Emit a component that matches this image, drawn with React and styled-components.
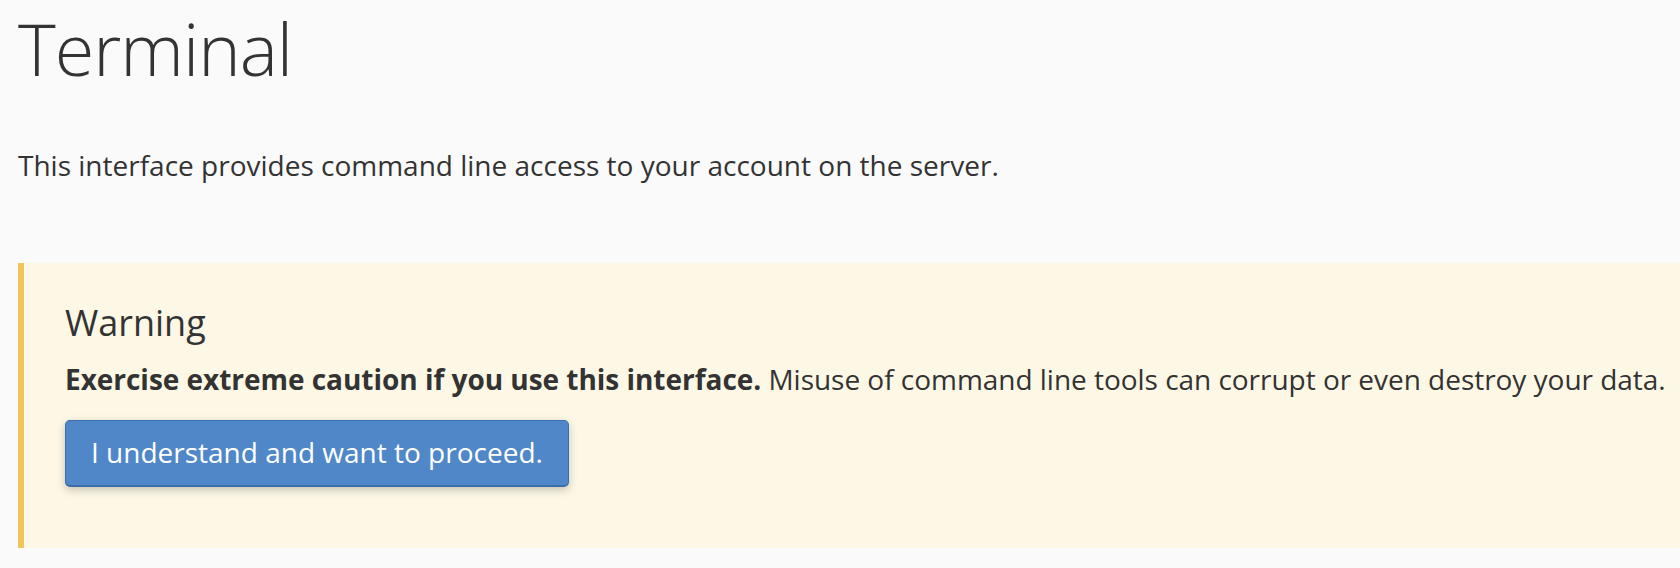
import React from "react";
import styled, { createGlobalStyle } from "styled-components";

const Global = createGlobalStyle`
  html, body {
    margin: 0;
    padding: 0;
    background: #fafafa;
  }
  body {
    font-family: "Open Sans", "Noto Sans", "Liberation Sans", sans-serif;
    color: #333333;
    overflow: hidden;
  }
`;

const Page = styled.main`
  padding: 8px 0 0 18px;
  display: flex;
  flex-direction: column;
`;

const Title = styled.h1`
  margin: 0;
  font-size: 72px;
  font-weight: 300;
  letter-spacing: -1px;
  line-height: 80px;
  color: #333333;
`;

const Intro = styled.p`
  margin: 57px 0 0;
  font-size: 28px;
  line-height: 40px;
`;

const Callout = styled.section`
  margin-top: 78px;
  background: #fdf8e5;
  border-left: 6px solid #f0c55c;
  padding: 40px 40px 61px 41px;
  display: flex;
  flex-direction: column;
  align-items: flex-start;
`;

const CalloutTitle = styled.h4`
  margin: 0;
  font-size: 36px;
  font-weight: 400;
  line-height: 1.1;
`;

const CalloutText = styled.p`
  margin: 16px 0 0;
  font-size: 28px;
  line-height: 40px;
  white-space: nowrap;
  letter-spacing: -0.03px;

  strong {
    font-weight: 700;
  }
`;

const Button = styled.button`
  margin-top: 21px;
  font-family: inherit;
  font-size: 28px;
  line-height: 40px;
  color: #ffffff;
  background: #4f87c8;
  border: 1px solid #3c6eab;
  border-bottom-width: 2px;
  border-radius: 5px;
  padding: 11px 25px 13px 25px;
  box-shadow: 0 3px 9px rgba(0, 0, 0, 0.22);
  cursor: pointer;
`;

export default function App() {
  return (
    <>
      <Global />
      <Page>
        <Title>Terminal</Title>
        <Intro>This interface provides command line access to your account on the server.</Intro>
        <Callout>
          <CalloutTitle>Warning</CalloutTitle>
          <CalloutText>
            <strong>Exercise extreme caution if you use this interface.</strong> Misuse of command line tools can corrupt or even destroy your data.
          </CalloutText>
          <Button type="button">I understand and want to proceed.</Button>
        </Callout>
      </Page>
    </>
  );
}
